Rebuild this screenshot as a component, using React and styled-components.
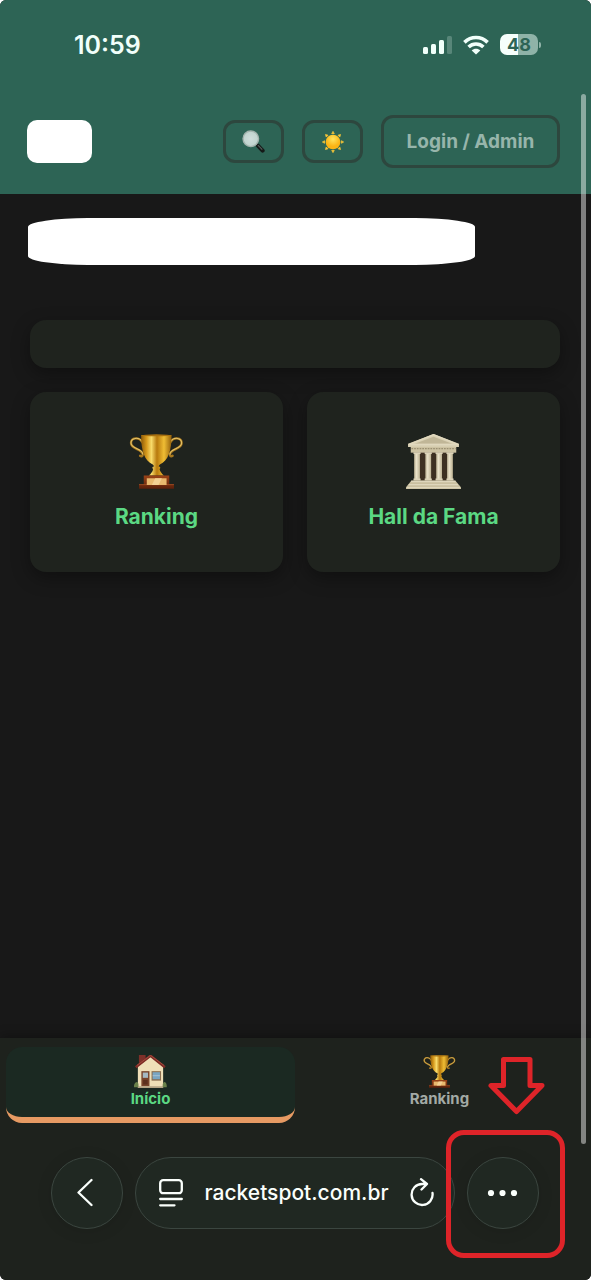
import React from "react";
import styled, { createGlobalStyle } from "styled-components";

const GlobalStyle = createGlobalStyle`
  *, *::before, *::after { box-sizing: border-box; }
  html { background: #ffffff; }
  body {
    margin: 0;
    font-family: Inter, "Liberation Sans", sans-serif;
    -webkit-font-smoothing: antialiased;
  }
  button, input { font: inherit; color: inherit; }
`;

const Screen = styled.div`
  position: relative;
  display: flex;
  flex-direction: column;
  min-height: 100vh;
  overflow: hidden;
  border-radius: 6px;
  background: #181818;
`;

const Top = styled.div`
  background: #2d6455;
`;

const StatusBar = styled.div`
  display: flex;
  align-items: center;
  justify-content: space-between;
  height: 89px;
  padding: 0 50px 0 74px;
  color: #f1fffa;
`;

const Clock = styled.time`
  font-size: 25px;
  line-height: 30px;
  font-weight: 600;
`;

const StatusIcons = styled.div`
  display: flex;
  align-items: center;
  gap: 11px;
`;

const Battery = styled.div`
  display: flex;
  align-items: center;
  gap: 1px;

  &::after {
    content: "";
    width: 2px;
    height: 6px;
    border-radius: 0 3px 3px 0;
    background: #8fb3a8;
  }
`;

const BatteryLevel = styled.span`
  width: 38px;
  height: 21px;
  border-radius: 7px;
  background: linear-gradient(90deg, #f6fffc 48%, #8fb3a8 48%);
  color: #2d6455;
  font-size: 18px;
  line-height: 21px;
  font-weight: 700;
  text-align: center;
`;

const Header = styled.header`
  display: flex;
  align-items: center;
  justify-content: space-between;
  padding: 26px 31px 26px 27px;
`;

const Logo = styled.div`
  width: 65px;
  height: 43px;
  border-radius: 10px;
  background: #ffffff;
`;

const Actions = styled.div`
  display: flex;
  align-items: center;
  gap: 18px;
`;

const OutlineButton = styled.button`
  display: flex;
  align-items: center;
  justify-content: center;
  width: ${(p) => (p.$wide ? 179 : 61)}px;
  height: ${(p) => (p.$wide ? 53 : 43)}px;
  padding: 0;
  border: 3px solid #2d473e;
  border-radius: 12px;
  background: transparent;
  color: #97b5ab;
  font-size: 19px;
  line-height: 24px;
  font-weight: 700;
`;

const Main = styled.main`
  flex: 1;
  display: flex;
  flex-direction: column;
  padding: 24px 31px 24px 30px;
`;

const Title = styled.div`
  width: calc(84% + 2px);
  height: 47px;
  margin: 0 0 55px -2px;
  border-radius: 60px / 9px;
  background: #ffffff;
`;

const Panel = styled.section`
  height: 48px;
  margin-bottom: 24px;
  border-radius: 16px;
  background: #1f231e;
  box-shadow: 0 6px 18px rgba(0, 0, 0, 0.35);
`;

const Cards = styled.div`
  display: grid;
  grid-template-columns: 1fr 1fr;
  gap: 24px;
`;

const Card = styled.a`
  display: flex;
  flex-direction: column;
  align-items: center;
  gap: 14px;
  height: 180px;
  padding-top: 42px;
  border-radius: 16px;
  background: #1f231e;
  box-shadow: 0 6px 18px rgba(0, 0, 0, 0.35);
  color: #5bd883;
  font-size: 21px;
  line-height: 28px;
  font-weight: 700;
  text-decoration: none;
`;

const Footer = styled.footer`
  background: #1e221d;
  box-shadow: 0 -3px 10px rgba(0, 0, 0, 0.25);
`;

const Tabs = styled.nav`
  display: grid;
  grid-template-columns: 1fr 1fr;
  padding: 9px 7px 0 6px;
`;

const Tab = styled.a`
  display: flex;
  flex-direction: column;
  align-items: center;
  gap: 2px;
  height: 76px;
  padding-top: 8px;
  border-bottom: 6px solid ${(p) => (p.$active ? "#e69a63" : "transparent")};
  border-radius: 16px;
  background: ${(p) => (p.$active ? "#1b2922" : "transparent")};
  color: ${(p) => (p.$active ? "#5bd883" : "#a3aaa5")};
  font-size: 15px;
  line-height: 18px;
  font-weight: 700;
  text-decoration: none;
`;

const BrowserBar = styled.div`
  display: flex;
  align-items: center;
  gap: 12px;
  padding: 34px 52px 51px 51px;
  color: #fafffc;
`;

const RoundButton = styled.button`
  display: flex;
  align-items: center;
  justify-content: center;
  width: 72px;
  height: 72px;
  padding: 0;
  border: 1px solid #3b4640;
  border-radius: 50%;
  background: #202822;
  box-shadow: 0 2px 16px rgba(0, 0, 0, 0.1);
`;

const AddressBar = styled.div`
  flex: 1;
  display: flex;
  align-items: center;
  min-width: 0;
  height: 72px;
  padding: 0 19px 0 22px;
  border: 1px solid #3b4640;
  border-radius: 36px;
  background: #202822;
`;

const IconButton = styled.button`
  display: flex;
  padding: 0;
  border: 0;
  background: none;
`;

const Address = styled.input`
  flex: 1;
  min-width: 0;
  padding: 0;
  border: 0;
  outline: 0;
  background: none;
  font-size: 21px;
  line-height: 28px;
  font-weight: 500;
  text-align: center;
`;

const Highlighted = styled.div`
  position: relative;
`;

const HighlightBox = styled.div`
  position: absolute;
  inset: -27px -26px -29px -21px;
  border: 5px solid #de2429;
  border-radius: 18px;
  pointer-events: none;
`;

const HighlightArrow = styled.svg`
  position: absolute;
  left: 20px;
  bottom: 114px;
`;

const ScrollThumb = styled.div`
  position: absolute;
  top: 94px;
  right: 5px;
  bottom: 136px;
  width: 5px;
  border-radius: 3px;
  background: rgba(255, 255, 255, 0.45);
`;

const Signal = () => (
  <svg width="29" height="20" viewBox="0 0 29 20" fill="currentColor" aria-hidden="true">
    <rect x="0" y="12" width="5" height="7" rx="1.5" />
    <rect x="8" y="9" width="5" height="10" rx="1.5" />
    <rect x="16" y="5" width="5" height="14" rx="1.5" />
    <rect x="24" y="1" width="5" height="18" rx="1.5" opacity="0.22" />
  </svg>
);

const Wifi = () => (
  <svg width="26" height="20" viewBox="0 0 26 20" aria-hidden="true">
    <g fill="none" stroke="currentColor" strokeWidth="3.6">
      <path d="M1.4 7.4C8 .9 18 .9 24.6 7.4" />
      <path d="M5.6 12C9.8 8 16.2 8 20.4 12" />
    </g>
    <path d="M13 19.4 8.7 15.4C11 13.200 15 13.200 17.3 15.4Z" fill="currentColor" />
  </svg>
);

const Magnifier = () => (
  <svg width="23" height="23" viewBox="0 0 68 68" aria-hidden="true">
    <defs>
      <radialGradient id="lens" cx="0.5" cy="0.5">
        <stop offset="0" stopColor="#cfdedb" />
        <stop offset="1" stopColor="#bfd3cd" />
      </radialGradient>
    </defs>
    <path d="M41 40 49 48" stroke="#8d9794" strokeWidth="6" />
    <path d="M47 46 61 61" stroke="#151a18" strokeWidth="12" strokeLinecap="round" />
    <path d="M47 45 60 58" stroke="#59615e" strokeWidth="3" />
    <circle cx="26" cy="26" r="23" fill="url(#lens)" stroke="#a3b3ad" strokeWidth="4" />
  </svg>
);

const Sun = () => (
  <svg width="22" height="22" viewBox="0 0 66 66" aria-hidden="true">
    <defs>
      <radialGradient id="sunFace" cx="0.5" cy="0.3">
        <stop offset="0" stopColor="#ffe45c" />
        <stop offset="1" stopColor="#fbb414" />
      </radialGradient>
    </defs>
    {[0, 45, 90, 135, 180, 225, 270, 315].map((a) => (
      <path key={a} d="M29 8 33 1 37 8Z" fill="#f9c737" stroke="#f9c737" strokeWidth="2" transform={`rotate(${a} 33 33)`} />
    ))}
    <circle cx="33" cy="33" r="22" fill="url(#sunFace)" />
  </svg>
);

const Trophy = ({ size, id }) => (
  <svg width={size} height={size} viewBox="0 0 160 164" aria-hidden="true">
    <defs>
      <linearGradient id={`${id}-gold`}>
        <stop offset="0" stopColor="#8d5a08" />
        <stop offset="0.18" stopColor="#d79a1d" />
        <stop offset="0.34" stopColor="#f8db6a" />
        <stop offset="0.52" stopColor="#b87a0d" />
        <stop offset="0.75" stopColor="#efbd34" />
        <stop offset="1" stopColor="#94600b" />
      </linearGradient>
      <linearGradient id={`${id}-wood`} x1="0" x2="0" y1="0" y2="1">
        <stop offset="0" stopColor="#9b4317" />
        <stop offset="1" stopColor="#5c200b" />
      </linearGradient>
    </defs>
    <g fill="none" strokeLinecap="round">
      <path d="M38 25C28 8 4 10 4 27 4 47 38 43 39 61 39 66 35 68 31 65" stroke="#a8781e" strokeWidth="7" />
      <path d="M38 24C28 8 4 10 4 27 4 46 38 42 39 60" stroke="#e3c36a" strokeWidth="3" />
      <path d="M121 25C131 8 155 10 155 27 155 47 121 43 120 61 120 66 124 68 128 65" stroke="#a8781e" strokeWidth="7" />
      <path d="M121 24C131 8 155 10 155 27 155 46 121 42 120 60" stroke="#e3c36a" strokeWidth="3" />
    </g>
    <path d="M34 3H125C125 50 115 80 90 91L86 96C92 98 93 101 89 104 91 112 96 118 102 124H57C63 118 69 112 70 104 66 101 67 98 73 96L69 91C44 80 34 50 34 3Z" fill={`url(#${id}-gold)`} />
    <ellipse cx="79.5" cy="4" rx="45.5" ry="3" fill="#a8700f" />
    <path d="M42 124H118V150H132V163H28V150H42Z" fill={`url(#${id}-wood)`} />
    <path d="M28 151H132" stroke="#b3592a" strokeWidth="2" />
    <rect x="51" y="132" width="59" height="20" fill="#e9b96f" />
    <path d="M76 132H96L86 152H66Z" fill="#f3d094" />
  </svg>
);

const Museum = () => (
  <svg width="55" height="55" viewBox="0 0 162 162" aria-hidden="true">
    <defs>
      <linearGradient id="column">
        <stop offset="0" stopColor="#bcb294" />
        <stop offset="0.4" stopColor="#e9e1c8" />
        <stop offset="1" stopColor="#bdb394" />
      </linearGradient>
    </defs>
    <rect x="26" y="52" width="110" height="86" fill="#3d3022" />
    <path d="M81 0 156 29V38H6V29Z" fill="#d9d0b3" />
    <path d="M81 8 136 29H26Z" fill="#c0b697" />
    <path d="M81 2 154 31H8Z" fill="none" stroke="#e0d8be" strokeWidth="4" />
    <rect x="14" y="38" width="134" height="17" fill="#cdc3a3" />
    <path d="M16 43H146" stroke="#9b9073" strokeWidth="4" strokeDasharray="5 3" />
    {[23, 56, 88, 120].map((x) => (
      <g key={x}>
        <rect x={x + 1} y="56" width="17" height="80" fill="url(#column)" />
        <rect x={x - 1} y="54" width="21" height="5" fill="#ddd4b9" />
        <rect x={x - 1} y="131" width="21" height="6" fill="#ddd4b9" />
      </g>
    ))}
    <path d="M16 137H145L162 157V162H0V157Z" fill="#c9bf9f" />
    <path d="M15 140H146M8 149H153M2 158H160" stroke="#ded6bc" strokeWidth="4" />
  </svg>
);

const House = () => (
  <svg width="33" height="33" viewBox="0 0 94 94" aria-hidden="true">
    <path d="M14 0H33V20L14 34Z" fill="#7d3029" />
    <path d="M11 33 47 4 83 33V93H11Z" fill="#efdfb8" />
    <path d="M5 35 47 2 88 35" fill="none" stroke="#7e2b25" strokeWidth="7" />
    <path d="M8 30 47 1 86 30" fill="none" stroke="#b35a4b" strokeWidth="2" />
    <rect x="21" y="46" width="23" height="43" fill="#77442b" />
    <rect x="25" y="50" width="15" height="15" fill="#a4b9c2" />
    <path d="M26 71H39V84H26Z" fill="#5c301e" />
    <rect x="50" y="46" width="27" height="27" fill="#8a6e50" />
    <rect x="53" y="49" width="21" height="20" fill="#79a5c2" />
    <path d="M53 59H74" stroke="#b7cfda" strokeWidth="2" />
    <path d="M11 89H83V94H11Z" fill="#b5a586" />
    <path d="M0 92C-1 84 3 77 9 77 14 79 13 89 12 92ZM82 92C81 84 82 77 88 77 93 79 94 89 93 92Z" fill="#69804a" />
  </svg>
);

const BackIcon = () => (
  <svg width="20" height="30" viewBox="0 0 20 30" fill="none" stroke="currentColor" strokeWidth="2.3" strokeLinecap="round" strokeLinejoin="round" aria-hidden="true">
    <path d="M14.500 2 1.500 14.500 14.500 27" />
  </svg>
);

const PageIcon = () => (
  <svg width="26" height="30" viewBox="0 0 26 30" fill="none" stroke="currentColor" strokeWidth="2.3" strokeLinecap="round" aria-hidden="true">
    <rect x="2.2" y="2.2" width="21.6" height="13" rx="3" />
    <path d="M2.2 21H23.8M2.2 27.3H16.5" />
  </svg>
);

const ReloadIcon = () => (
  <svg width="26" height="30" viewBox="0 0 26 30" fill="none" stroke="currentColor" strokeWidth="2.3" strokeLinecap="round" strokeLinejoin="round" aria-hidden="true">
    <path d="M23.5 15A10.500 10.500 0 1 1 13 6H18M12 1.200 18 6 12.500 11.500" />
  </svg>
);

const MoreIcon = () => (
  <svg width="32" height="8" viewBox="0 0 32 8" fill="currentColor" aria-hidden="true">
    <circle cx="4" cy="4" r="3.1" />
    <circle cx="15.500" cy="4" r="3.1" />
    <circle cx="27" cy="4" r="3.1" />
  </svg>
);

export default function App() {
  return (
    <>
      <GlobalStyle />
      <Screen>
        <Top>
          <StatusBar>
            <Clock>10:59</Clock>
            <StatusIcons>
              <Signal />
              <Wifi />
              <Battery>
                <BatteryLevel>48</BatteryLevel>
              </Battery>
            </StatusIcons>
          </StatusBar>
          <Header>
            <Logo />
            <Actions>
              <OutlineButton type="button" aria-label="Buscar"><Magnifier /></OutlineButton>
              <OutlineButton type="button" aria-label="Tema"><Sun /></OutlineButton>
              <OutlineButton type="button" $wide>Login / Admin</OutlineButton>
            </Actions>
          </Header>
        </Top>
        <Main>
          <Title />
          <Panel />
          <Cards>
            <Card href="#ranking">
              <Trophy size={55} id="card" />
              Ranking
            </Card>
            <Card href="#hall">
              <Museum />
              Hall da Fama
            </Card>
          </Cards>
        </Main>
        <Footer>
          <Tabs>
            <Tab href="#inicio" $active>
              <House />
              Início
            </Tab>
            <Tab href="#ranking">
              <Trophy size={33} id="tab" />
              Ranking
            </Tab>
          </Tabs>
          <BrowserBar>
            <RoundButton type="button" aria-label="Voltar"><BackIcon /></RoundButton>
            <AddressBar>
              <IconButton type="button" aria-label="Página"><PageIcon /></IconButton>
              <Address type="text" aria-label="Endereço" defaultValue="racketspot.com.br" />
              <IconButton type="button" aria-label="Recarregar"><ReloadIcon /></IconButton>
            </AddressBar>
            <Highlighted>
              <RoundButton type="button" aria-label="Mais"><MoreIcon /></RoundButton>
              <HighlightBox />
              <HighlightArrow width="59" height="60" viewBox="0 0 59 60" fill="none" stroke="#de2429" strokeWidth="5" strokeLinejoin="round" aria-hidden="true">
                <path d="M16.5 4.500H43V30.500H55L29.5 56.500 4 30.500H16.5Z" />
              </HighlightArrow>
            </Highlighted>
          </BrowserBar>
        </Footer>
        <ScrollThumb />
      </Screen>
    </>
  );
}
